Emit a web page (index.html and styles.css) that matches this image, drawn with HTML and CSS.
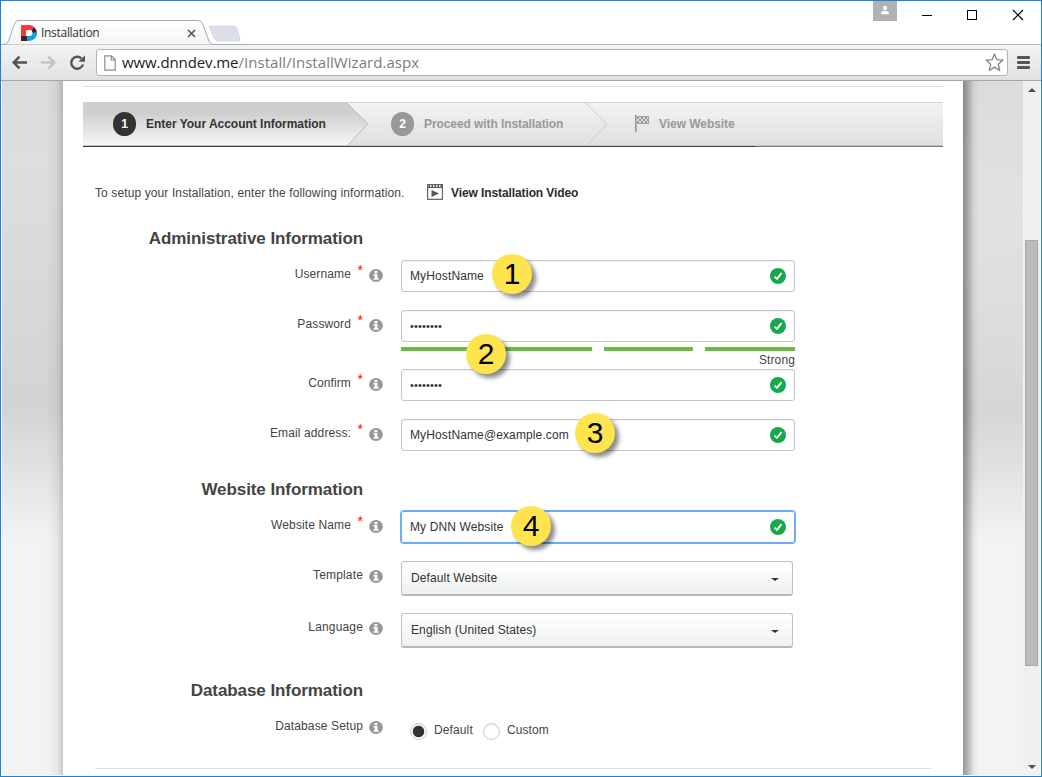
FILE: index.html
```html
<!DOCTYPE html>
<html lang="en">
<head>
<meta charset="utf-8">
<title>Installation</title>
<link rel="stylesheet" href="styles.css">
</head>
<body>
<svg class="defs" aria-hidden="true">
  <defs>
    <symbol id="info" viewBox="0 0 14 14" preserveAspectRatio="none">
      <circle cx="7" cy="7" r="6.9" fill="#979797"/>
      <path d="M5.400 2.200h3v2.300h-3zM4.500 5.500h4v4.500h1.200v1.600H4.500V10h1.200V7H4.500z" fill="#fff"/>
    </symbol>
    <symbol id="check" viewBox="0 0 16 16">
      <circle cx="8" cy="8" r="8" fill="#14aa4b"/>
      <path d="M4.500 8.600 7 10.900 11.500 5.100" fill="none" stroke="#fff" stroke-width="1.900"/>
    </symbol>
    <linearGradient id="tabfill" x1="0" y1="0" x2="0" y2="1"><stop offset="0" stop-color="#fff"/><stop offset="1" stop-color="#f4f4f4"/></linearGradient>
    <pattern id="flagcheck" width="4" height="4" patternUnits="userSpaceOnUse"><path d="M0 0h2v2H0zM2 2h2v2H2z" fill="#999"/></pattern>
  </defs>
</svg>
<div class="window">
  <header class="tabstrip">
    <div class="tab">
      <svg class="tab-shape" width="242" height="25" viewBox="0 0 242 25">
        <path d="M208.5 8q-1-2 1.5-2h22q3 0 4 2.500l3 10.500q.7 2-1.500 2h-20q-3.500 0-4.500-3z" fill="#dbdfe6" stroke="#d0d3d8" stroke-width=".7"/>
        <path d="M0 24.500H2Q6 24.500 7.500 21L13.500 4Q14.700.5 18 .5H197Q200.500.5 201.800 4L207.500 20Q209 24.500 213 24.500H242V25H0z" fill="url(#tabfill)" stroke="#aaa"/>
      </svg>
      <svg class="favicon" width="16" height="16" viewBox="0 0 16 16">
        <path d="M0 0h8q4 0 6 3l-3 3H5v5H0z" fill="#f03c41"/>
        <path d="M13.500 2.500Q16 5 16 8h-5V5z" fill="#481f28"/>
        <path d="M16 7a8 8 0 0 1-8 9H5.500v-5H8l3-3z" fill="#0ca6e2"/>
        <path d="M0 11h6v5H0z" fill="#481f28"/>
        <path d="M5.500 5h3a3 3 0 0 1 0 6h-3z" fill="#fff"/>
      </svg>
      <span class="tab-title">Installation</span>
      <svg class="tab-close" width="9" height="9" viewBox="0 0 9 9"><path d="M1 1l7 7M8 1 1 8" stroke="#5a5a5a" stroke-width="1.700"/></svg>
    </div>
    <div class="controls">
      <span class="user"><svg width="24" height="20" viewBox="0 0 24 20"><circle cx="12" cy="7" r="2.200" fill="#fff"/><path d="M8 13.200v-1Q8 10 12 10t4 2.200v1z" fill="#fff"/></svg></span>
      <svg class="winbtns" width="100" height="20" viewBox="0 0 100 20" fill="none" stroke="#000">
        <path d="M0 14.500h10M45.500 9.500h9v9h-9z" shape-rendering="crispEdges"/><path d="M91 9l10 10M101 9l-10 10" stroke-width="1.200"/>
      </svg>
    </div>
  </header>

  <div class="toolbar">
    <svg class="nav-icons" width="76" height="18" viewBox="0 0 76 18" fill="none">
      <path d="M17 8.500H4M9.500 2.700 3.700 8.500l5.800 5.800" stroke="#545454" stroke-width="2.500"/>
      <path d="M31 8.500h13M38.500 2.700 44.300 8.500l-5.800 5.800" stroke="#c4c4c4" stroke-width="2.500"/>
      <path d="M71.500 4.500A6 6 0 1 0 73 10.500" stroke="#545454" stroke-width="2.400"/><path d="M75 1.200v6.500h-6.500z" fill="#545454"/>
    </svg>
    <div class="omnibox">
      <svg width="12" height="16" viewBox="0 0 12 16"><path d="M.8.8h6.700l3.700 3.700v10.700H.8zM7.300.8v4h4" fill="#fafafa" stroke="#8f8f8f" stroke-width="1.200"/></svg>
      <span class="url">www.dnndev.me<span class="path">/Install/InstallWizard.aspx</span></span>
      <svg class="star" width="19" height="19" viewBox="0 0 19 19"><path d="M9.500 1 11.700 6.600l6.300.5-4.700 4.100 1.400 6.300-5.200-3.400-5.200 3.400 1.400-6.300L1 7.100l6.300-.5z" fill="#fff" stroke="#858585" stroke-width="1.300" stroke-linejoin="round"/></svg>
    </div>
    <span class="menu"><i></i><i></i><i></i></span>
  </div>

  <main class="viewport">
    <div class="gutter left"></div>
    <div class="page">
      <div class="rule top"></div>
      <nav class="wizard">
        <svg class="wizard-bg" width="860" height="45" viewBox="0 0 860 45">
          <defs>
            <linearGradient id="on" x1="0" y1="0" x2="0" y2="1"><stop offset=".25" stop-color="#cfcfcf"/><stop offset="1" stop-color="#f8f8f8"/></linearGradient>
            <linearGradient id="off" x1="0" y1="0" x2="0" y2="1"><stop offset="0" stop-color="#f3f3f3"/><stop offset="1" stop-color="#dfdfdf"/></linearGradient>
          </defs>
          <path d="M0 0h860v44H0z" fill="url(#off)"/>
          <path d="M263 .5h597" stroke="#d2d2d2"/>
          <path d="M0 0h263l22 22-21 22H0z" fill="url(#on)"/>
          <path d="M263.500.5 284.700 22 264 44" fill="none" stroke="#b9b9b9"/>
          <path d="M502 0l22 22.500L503 44" fill="none" stroke="#c8c8c8"/>
          <path d="M0 43.500h860" stroke="#c4c4c4"/>
          <path d="M0 44.500h672" stroke="#3f3f3f"/><path d="M672 44.500h188" stroke="#777"/>
        </svg>
        <div class="step one"><span class="num">1</span>Enter Your Account Information</div>
        <div class="step two"><span class="num">2</span>Proceed with Installation</div>
        <div class="step three"><svg width="14" height="17" viewBox="0 0 14 17"><path d="M.8 0v17" stroke="#999" stroke-width="1.700"/><path d="M2 1h12v8H2z" fill="#ddd"/><path d="M2 1h12v8H2z" fill="url(#flagcheck)"/><path d="M2 1.500h11.500v7H2" fill="none" stroke="#999" stroke-width=".8"/></svg>View Website</div>
      </nav>

      <div class="intro">
        <span class="intro-text">To setup your Installation, enter the following information.</span>
        <svg width="16" height="16" viewBox="0 0 16 16"><path d="M.6.600h14.800v14.800H.6z" fill="none" stroke="#666" stroke-width="1.200"/><path d="M1 3.500h14" stroke="#555" stroke-width="1"/><path d="M1.500 2h14" stroke="#555" stroke-width="2" stroke-dasharray="1.500 1.500"/><path d="M4.500 6v7l7.500-3.500z" fill="#555"/></svg>
        <a class="video">View Installation Video</a>
      </div>

      <h2>Administrative Information</h2>
      <div class="row username">
        <label class="required">Username<b>*</b></label><svg class="info"><use href="#info"/></svg>
        <div class="field"><div class="input">MyHostName<svg class="ok"><use href="#check"/></svg></div><span class="callout c1">1</span></div>
      </div>
      <div class="row password">
        <label class="required">Password<b>*</b></label><svg class="info"><use href="#info"/></svg>
        <div class="field"><div class="input"><span class="dots">••••••••</span><svg class="ok"><use href="#check"/></svg></div>
          <div class="meter"><i></i><i></i><i></i></div><div class="strength">Strong</div><span class="callout c2">2</span></div>
      </div>
      <div class="row confirm">
        <label class="required">Confirm<b>*</b></label><svg class="info"><use href="#info"/></svg>
        <div class="field"><div class="input"><span class="dots">••••••••</span><svg class="ok"><use href="#check"/></svg></div></div>
      </div>
      <div class="row email">
        <label class="required">Email address:<b>*</b></label><svg class="info"><use href="#info"/></svg>
        <div class="field"><div class="input">MyHostName@example.com<svg class="ok"><use href="#check"/></svg></div><span class="callout c3">3</span></div>
      </div>

      <h2>Website Information</h2>
      <div class="row website">
        <label class="required">Website Name<b>*</b></label><svg class="info"><use href="#info"/></svg>
        <div class="field"><div class="input focused">My DNN Website<svg class="ok"><use href="#check"/></svg></div><span class="callout c4">4</span></div>
      </div>
      <div class="row select-row">
        <label>Template</label><svg class="info"><use href="#info"/></svg>
        <div class="field"><div class="select">Default Website<i class="caret"></i></div></div>
      </div>
      <div class="row select-row last">
        <label>Language</label><svg class="info"><use href="#info"/></svg>
        <div class="field"><div class="select">English (United States)<i class="caret"></i></div></div>
      </div>

      <h2>Database Information</h2>
      <div class="row database">
        <label>Database Setup</label><svg class="info"><use href="#info"/></svg>
        <div class="field radios"><span class="radio checked"></span><span class="choice">Default</span><span class="radio"></span><span class="choice">Custom</span></div>
      </div>
      <div class="rule bottom"></div>
    </div>
    <div class="gutter right"></div>
    <div class="scrollbar"><i class="arrow up"></i><div class="thumb"></div><i class="arrow down"></i></div>
  </main>
</div>
</body>
</html>
```
FILE: styles.css
```css
* { box-sizing: border-box; }
body { margin: 0; font: 12px/16px "Liberation Sans", Arial, sans-serif; color: #444; letter-spacing: .12px; }
svg { display: block; flex: none; }
.defs { position: absolute; width: 0; height: 0; }
.window { width: 1042px; height: 777px; border: 1px solid #1883d7; background: #fff; display: flex; flex-direction: column; overflow: hidden; }

/* browser chrome */
.tabstrip { height: 44px; flex: none; display: flex; justify-content: space-between; border-bottom: 1px solid #b0b0b0; }
.tab { position: relative; width: 242px; height: 44px; padding: 20px 0 0 20px; display: flex; align-items: center; font: 12px/16px "Open Sans", "Noto Sans", sans-serif; letter-spacing: -.3px; color: #333; }
.tab-shape { position: absolute; left: 0; top: 19px; }
.favicon, .tab-title, .tab-close { position: relative; }
.tab-title { width: 146px; margin-left: 4px; }
.controls { display: flex; width: 168px; }
.user { width: 24px; height: 20px; background: #b1b1b1; }
.winbtns { height: 20px; margin-left: 25px; overflow: visible; }
.toolbar { height: 36px; flex: none; display: flex; align-items: center; padding: 0 11px 0 9px; background: linear-gradient(#f4f4f4, #e1e1e1); border-bottom: 1px solid #a6a6a6; }
.omnibox { flex: 1; height: 27px; margin-left: 10px; padding: 0 3px 0 7px; background: #fff; border: 1px solid #b4b4b4; border-radius: 3px; display: flex; align-items: center; }
.url { flex: 1; margin-left: 6px; padding-bottom: 1px; font: 15px/21px "Open Sans", "Noto Sans", sans-serif; letter-spacing: -.1px; color: #222; }
.path { color: #7d7d7d; letter-spacing: .05px; }
.menu { width: 13px; margin-left: 9px; display: grid; gap: 2px; }
.menu i { height: 3px; border-radius: 1px; background: #555; }

/* content area */
.viewport { flex: 1; min-height: 0; display: flex; margin: 0 1px 1px; }
.page { width: 900px; padding: 5px 20px 0; background: #fff; flex: none; overflow: hidden; }
.gutter.left { width: 61px; background: linear-gradient(to left, rgba(0,0,0,.17), rgba(0,0,0,.05) 6px, transparent 16px), linear-gradient(#dadbdb 0, #dedede 80px, #d9d9da 200px, #d2d3d4 325px, #dedfdf 375px, #f3f3f3 460px); }
.gutter.right { width: 60px; background: linear-gradient(to right, rgba(0,0,0,.38), rgba(0,0,0,.25) 5px, rgba(0,0,0,.05) 11px, transparent 17px), linear-gradient(#dcdcdc 0, #e2e2e2 130px, #dededf 220px, #d5d6d7 330px, #dfdfdf 375px, #f3f3f3 460px); }
.scrollbar { width: 17px; background: #f0f0f0; display: flex; flex-direction: column; align-items: center; }
.arrow { border: 4px solid transparent; height: 0; width: 0; }
.arrow.up { margin-top: 3px; border-bottom-color: #505050; }
.thumb { width: 13px; height: 426px; margin: 148px 0 auto; background: #bbb; border: 1px solid #a8a8a8; }
.arrow.down { margin-bottom: 2px; border-top-color: #505050; }
.rule { height: 1px; background: #ddd; }
.rule.bottom { margin: 0 12px; }

.wizard { position: relative; height: 45px; margin-top: 15px; display: flex; align-items: flex-start; font-weight: bold; letter-spacing: -.02px; color: #999; }
.wizard-bg { position: absolute; left: 0; top: 0; }
.step { position: relative; display: flex; align-items: center; height: 43px; }
.step.one { width: 278px; padding-left: 30px; color: #333; }
.step.two { width: 240px; padding-left: 30px; letter-spacing: -.08px; }
.step.three { padding-left: 34px; gap: 10px; letter-spacing: -.05px; }
.num { width: 23px; height: 24px; border-radius: 12px; margin-right: 10px; background: #333; color: #fff; display: flex; align-items: center; justify-content: center; }
.two .num { background: #999; }

.intro { display: flex; align-items: center; height: 18px; margin: 36px 0 0 12px; letter-spacing: .11px; }
.intro-text { width: 332px; padding-top: 2px; white-space: nowrap; }
.video { margin-left: 8px; padding-top: 2px; font-weight: bold; letter-spacing: -.1px; color: #2b2b2b; }

h2 { width: 280px; margin: 28px 0 11px; font-size: 17px; line-height: 20px; text-align: right; letter-spacing: -.08px; color: #444; }

.row { display: flex; align-items: flex-start; }
.row label { width: 280px; padding-top: 6px; text-align: right; }
.row label.required { padding-top: 5px; }
.row label b { display: inline-block; width: 7px; margin-left: 5px; color: #f00; font-weight: normal; font-size: 14px; line-height: 10px; vertical-align: 3px; }
.info { width: 14px; height: 13px; margin: 9px 18px 0 6px; }
.field { position: relative; width: 394px; }
.input { height: 32px; padding: 0 8px; border: 1px solid #c6c6c6; border-radius: 3px; display: flex; align-items: center; justify-content: space-between; box-shadow: inset 0 1px 2px rgba(0,0,0,.06); color: #333; }
.ok { width: 16px; height: 16px; }
.dots { font-size: 11px; letter-spacing: .15px; }
.focused { border-color: #68a8fa; box-shadow: 0 0 0 1px #72adfb; }
.username, .confirm { height: 50px; }
.password { height: 59px; }
.email { height: 32px; }
.website { height: 50px; }
.meter { display: flex; justify-content: space-between; margin-top: 5px; }
.meter i { height: 4px; background: #69bc45; width: 191px; }
.meter i:nth-child(2) { width: 89px; }
.meter i:nth-child(3) { width: 90px; }
.strength { text-align: right; line-height: 18px; }
.email + h2 { margin: 29px 0 11px; }
.select-row { height: 52px; letter-spacing: .16px; }
.select-row.last { height: 35px; }
.select-row.last + h2 { margin: 33px 0 11px; }
.select { width: 392px; height: 35px; padding: 0 13px 0 9px; border: 1px solid #c2c2c2; border-bottom: 2px solid #b8b8b8; border-radius: 3px; background: linear-gradient(#fff, #eff0f0); display: flex; align-items: center; justify-content: space-between; color: #333; letter-spacing: .12px; }
.caret { border: 4px solid transparent; border-top: 3px solid #333; border-bottom: 0; margin-top: 3px; }
.database { height: 56px; }
.radios { display: flex; align-items: center; padding: 10px 0 0 9px; width: auto; }
.choice { padding-bottom: 2px; }
.radio { width: 17px; height: 17px; border-radius: 50%; border: 1px solid #ccc; background: #fff; margin-right: 7px; box-shadow: inset 0 1px 1px rgba(0,0,0,.1); }
.radio.checked { background: radial-gradient(circle, #333 5.300px, #fff 6.200px); }
.choice + .radio { margin-left: 10px; }

/* numbered callouts */
.callout { position: absolute; width: 40px; height: 40px; border-radius: 50%; background: #ffe44d; box-shadow: 4px 4px 4px rgba(0,0,0,.45); color: #000; font-size: 30px; line-height: 39px; letter-spacing: 0; text-align: center; z-index: 2; }
.c1 { left: 91px; top: -6px; }
.c2 { left: 65px; top: 24px; }
.c3 { left: 174px; top: -6px; }
.c4 { left: 110px; top: -5px; }
```
